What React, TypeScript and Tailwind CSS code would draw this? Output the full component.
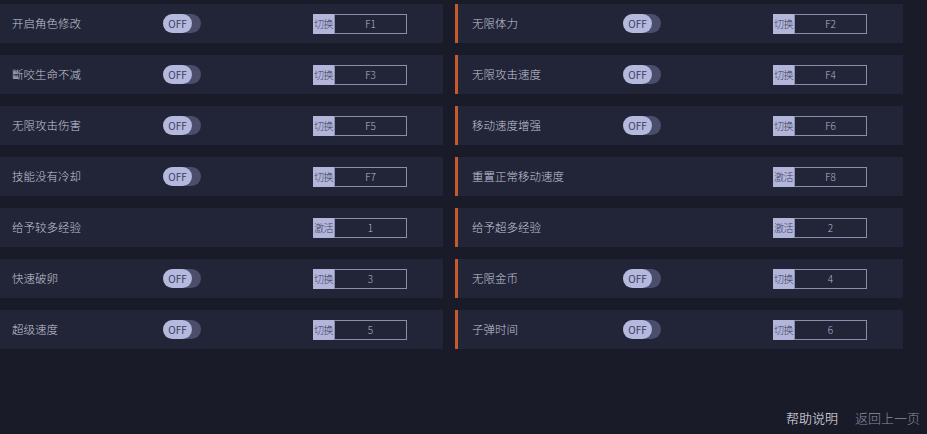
import React from "react";

type Item = { label: string; toggle: boolean; kind: string; key: string };

const left: Item[] = [
  { label: "开启角色修改", toggle: true, kind: "切换", key: "F1" },
  { label: "斷咬生命不减", toggle: true, kind: "切换", key: "F3" },
  { label: "无限攻击伤害", toggle: true, kind: "切换", key: "F5" },
  { label: "技能没有冷却", toggle: true, kind: "切换", key: "F7" },
  { label: "给予较多经验", toggle: false, kind: "激活", key: "1" },
  { label: "快速破卵", toggle: true, kind: "切换", key: "3" },
  { label: "超级速度", toggle: true, kind: "切换", key: "5" },
];

const right: Item[] = [
  { label: "无限体力", toggle: true, kind: "切换", key: "F2" },
  { label: "无限攻击速度", toggle: true, kind: "切换", key: "F4" },
  { label: "移动速度增强", toggle: true, kind: "切换", key: "F6" },
  { label: "重置正常移动速度", toggle: false, kind: "激活", key: "F8" },
  { label: "给予超多经验", toggle: false, kind: "激活", key: "2" },
  { label: "无限金币", toggle: true, kind: "切换", key: "4" },
  { label: "子弹时间", toggle: true, kind: "切换", key: "6" },
];

const font = { fontFamily: '"Noto Sans CJK SC", "Noto Sans", sans-serif' };

function Toggle() {
  return (
    <div className="flex h-[19px] w-[38px] items-center rounded-full bg-[#4b4e6b]">
      <div className="flex h-[19px] w-[29px] items-center justify-center rounded-full bg-[#b6b9de] text-[10px] leading-none text-[#3a3d5c]">
        OFF
      </div>
    </div>
  );
}

function KeyBox({ kind, k }: { kind: string; k: string }) {
  return (
    <div className="flex h-[20px] w-[94px]">
      <div className="flex w-[21px] items-center justify-center bg-[#b3b6da] text-[10px] font-light leading-none text-[#3b3e5c] tracking-[-0.5px]">
        {kind}
      </div>
      <div className="flex flex-1 items-center justify-center border border-[#8b8ea9] text-[10px] font-light leading-none text-[#b4b7cc]">
        {k}
      </div>
    </div>
  );
}

function Row({ item, leftPad }: { item: Item; leftPad: string }) {
  return (
    <div className={`flex h-[39px] items-center bg-[#222437] ${leftPad}`}>
      <div className="w-[151px] text-[11.5px] font-light text-[#c3c6d8]">{item.label}</div>
      <div className="w-[150px]">{item.toggle ? <Toggle /> : null}</div>
      <KeyBox kind={item.kind} k={item.key} />
    </div>
  );
}

export default function App() {
  return (
    <div
      className="relative h-[434px] w-[927px] overflow-hidden bg-[#1a1b29]"
      style={font}
    >
      <div className="flex gap-[12px] pt-[4px]">
        <div className="flex w-[443px] flex-col gap-[12px]">
          {left.map((it) => (
            <Row key={it.label} item={it} leftPad="pl-[12px]" />
          ))}
        </div>
        <div className="flex w-[448px] flex-col gap-[12px]">
          {right.map((it) => (
            <div key={it.label} className="flex">
              <div className="w-[3px] bg-[#c75a2c]" />
              <div className="flex-1">
                <Row item={it} leftPad="pl-[14px]" />
              </div>
            </div>
          ))}
        </div>
      </div>
      <div className="absolute bottom-[6px] right-[7px] flex gap-[17px] text-[13px] font-light leading-[20px]">
        <span className="text-[#eceef5]">帮助说明</span>
        <span className="text-[#8a8da3]">返回上一页</span>
      </div>
    </div>
  );
}
